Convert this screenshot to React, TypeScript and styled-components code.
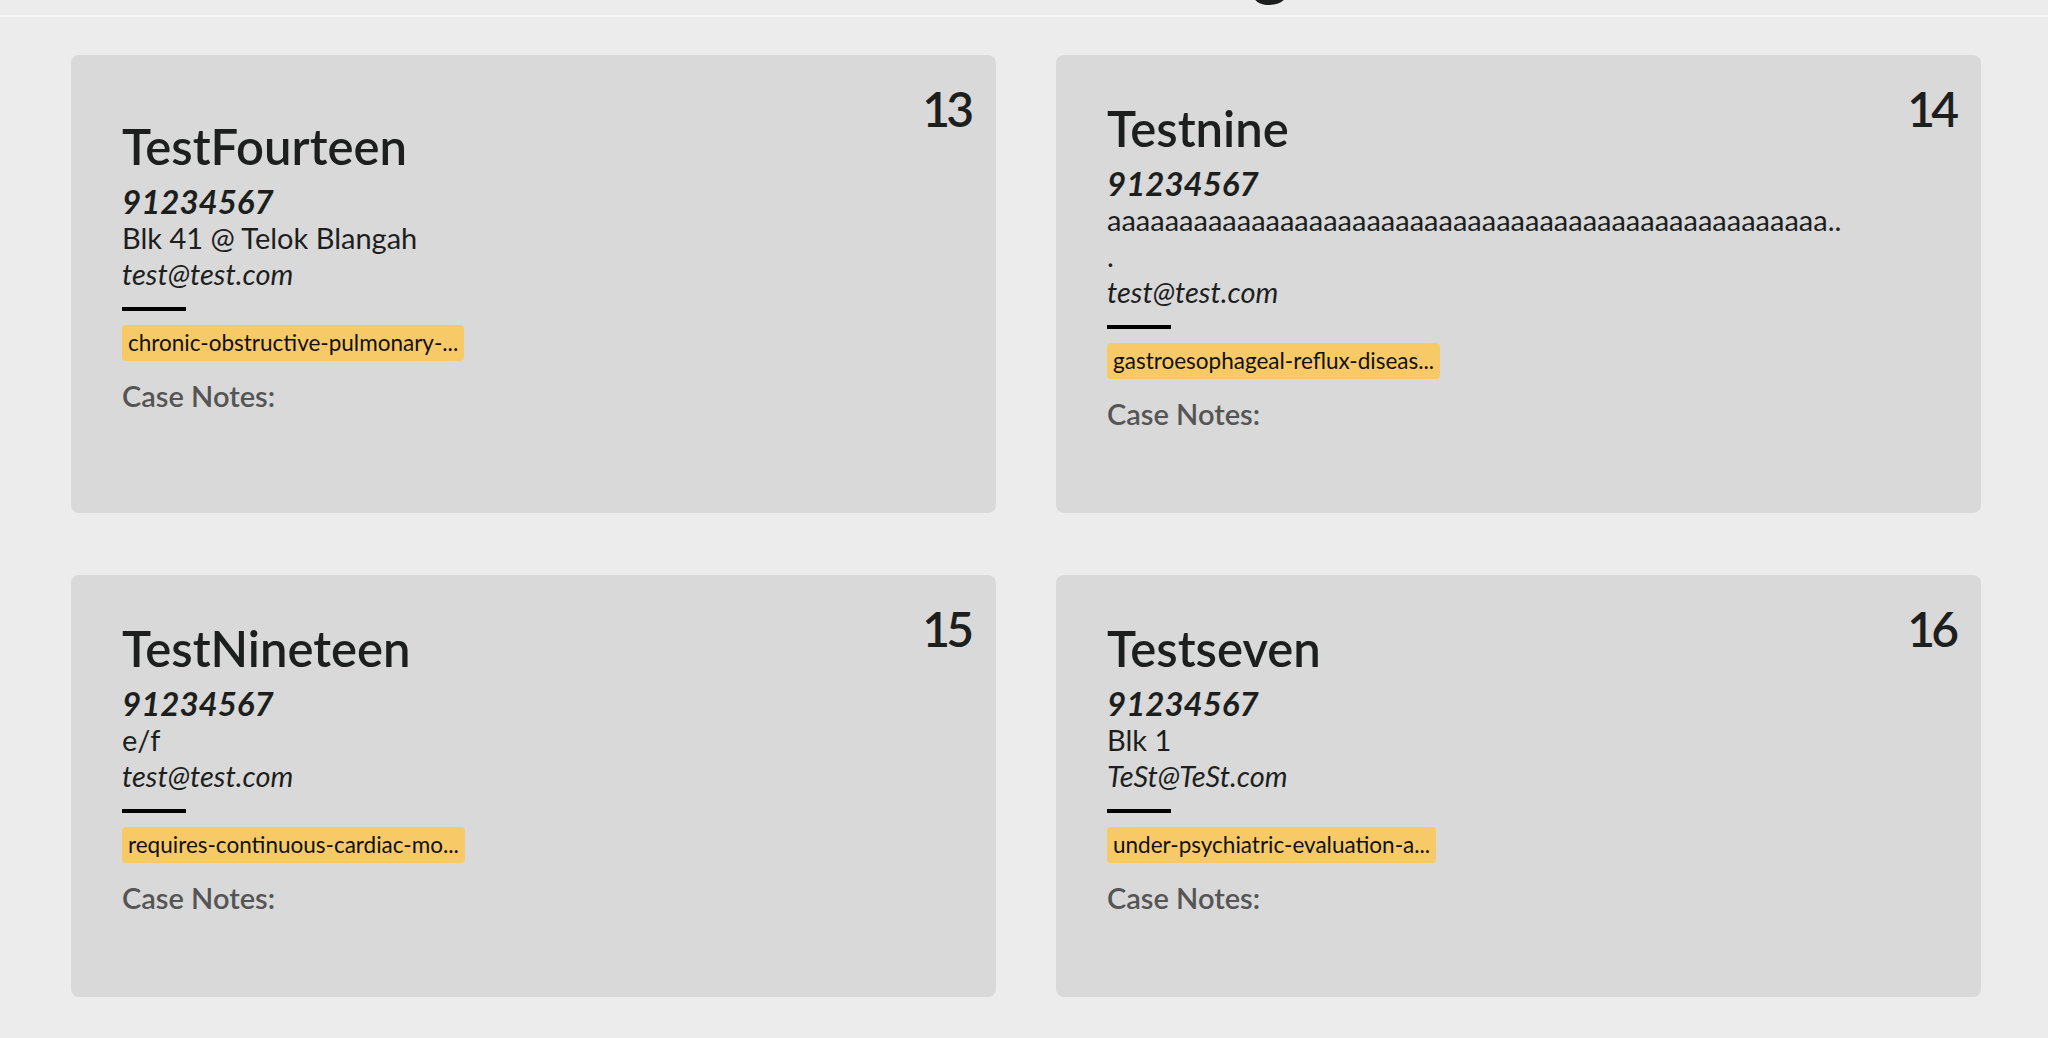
import React from 'react';
import styled, { createGlobalStyle } from 'styled-components';

const GlobalStyle = createGlobalStyle`
  html, body {
    margin: 0;
    padding: 0;
    background: #ececec;
    font-family: Lato, "Open Sans", sans-serif;
    color: #1d1f1e;
    overflow: hidden;
  }
`;

const Page = styled.div`
  min-height: 100vh;
  background: #ececec;
`;

const Header = styled.header`
  height: 15px;
  overflow: hidden;
  display: flex;
  justify-content: center;
  align-items: flex-end;
  padding-left: 70px;
  border-bottom: 2px solid #f6f6f6;
`;

const PageTitle = styled.h1`
  margin: 0;
  padding-bottom: 16px;
  font-size: 72px;
  line-height: 1;
  font-weight: 700;
  color: #1d1f1e;
`;

const CardGrid = styled.main`
  display: grid;
  grid-template-columns: 1fr 1fr;
  column-gap: 60px;
  row-gap: 62px;
  padding: 38px 67px 40px 71px;
`;

const Card = styled.section`
  display: flex;
  background: #d9d9d9;
  border-radius: 8px;
  padding: 30px 26px 37px 51px;
`;

const Details = styled.div`
  flex: 1;
  min-width: 0;
  max-width: 736px;
  display: flex;
  flex-direction: column;
  justify-content: center;
  padding-top: 7px;
`;

const Index = styled.div`
  align-self: flex-start;
  margin-left: auto;
  font-size: 48px;
  line-height: 1;
  font-weight: 600;
  letter-spacing: -4px;
`;

const Name = styled.h2`
  margin: 0;
  font-size: 49px;
  line-height: 72px;
  font-weight: 600;
`;

const Phone = styled.div`
  font-size: 33px;
  line-height: 38px;
  font-weight: 700;
  font-style: italic;
`;

const Line = styled.div<{ $italic?: boolean }>`
  font-size: 29px;
  line-height: 36px;
  font-style: ${({ $italic }) => ($italic ? 'italic' : 'normal')};
  overflow-wrap: anywhere;
`;

const Divider = styled.hr`
  width: 64px;
  height: 4px;
  margin: 15px 0 0;
  border: none;
  background: #000;
`;

const Tags = styled.div`
  display: flex;
  flex-wrap: wrap;
  gap: 8px;
  margin-top: 14px;
`;

const Tag = styled.span`
  display: inline-block;
  height: 36px;
  line-height: 36px;
  padding: 0 6px;
  border-radius: 4px;
  background: #f8ca67;
  font-size: 22.5px;
  color: #111;
`;

const NotesLabel = styled.div`
  margin-top: 17px;
  font-size: 29px;
  line-height: 36px;
  font-weight: 600;
  color: #555;
`;

const NotesBody = styled.div`
  min-height: 44px;
  font-size: 24px;
  color: #333;
`;

type Person = {
  index: number;
  name: string;
  phone: string;
  address: string;
  email: string;
  tags: string[];
  notes: string;
};

const people: Person[] = [
  {
    index: 13,
    name: 'TestFourteen',
    phone: '91234567',
    address: 'Blk 41 @ Telok Blangah',
    email: 'test@test.com',
    tags: ['chronic-obstructive-pulmonary-disease'],
    notes: '',
  },
  {
    index: 14,
    name: 'Testnine',
    phone: '91234567',
    address: 'a'.repeat(50) + '...',
    email: 'test@test.com',
    tags: ['gastroesophageal-reflux-disease'],
    notes: '',
  },
  {
    index: 15,
    name: 'TestNineteen',
    phone: '91234567',
    address: 'e/f',
    email: 'test@test.com',
    tags: ['requires-continuous-cardiac-monitoring'],
    notes: '',
  },
  {
    index: 16,
    name: 'Testseven',
    phone: '91234567',
    address: 'Blk 1',
    email: 'TeSt@TeSt.com',
    tags: ['under-psychiatric-evaluation-and-care'],
    notes: '',
  },
];

const shorten = (tag: string) => (tag.length > 30 ? tag.slice(0, 30) + '...' : tag);

const PersonCard = ({ person }: { person: Person }) => (
  <Card>
    <Details>
      <Name>{person.name}</Name>
      <Phone>{person.phone}</Phone>
      <Line>{person.address}</Line>
      <Line $italic>{person.email}</Line>
      <Divider />
      <Tags>
        {person.tags.map((t) => (
          <Tag key={t}>{shorten(t)}</Tag>
        ))}
      </Tags>
      <NotesLabel>Case Notes:</NotesLabel>
      <NotesBody>{person.notes}</NotesBody>
    </Details>
    <Index>{person.index}</Index>
  </Card>
);

export default function App() {
  return (
    <Page>
      <GlobalStyle />
      <Header>
        <PageTitle>Patient Listing</PageTitle>
      </Header>
      <CardGrid>
        {people.map((p) => (
          <PersonCard key={p.index} person={p} />
        ))}
      </CardGrid>
    </Page>
  );
}
